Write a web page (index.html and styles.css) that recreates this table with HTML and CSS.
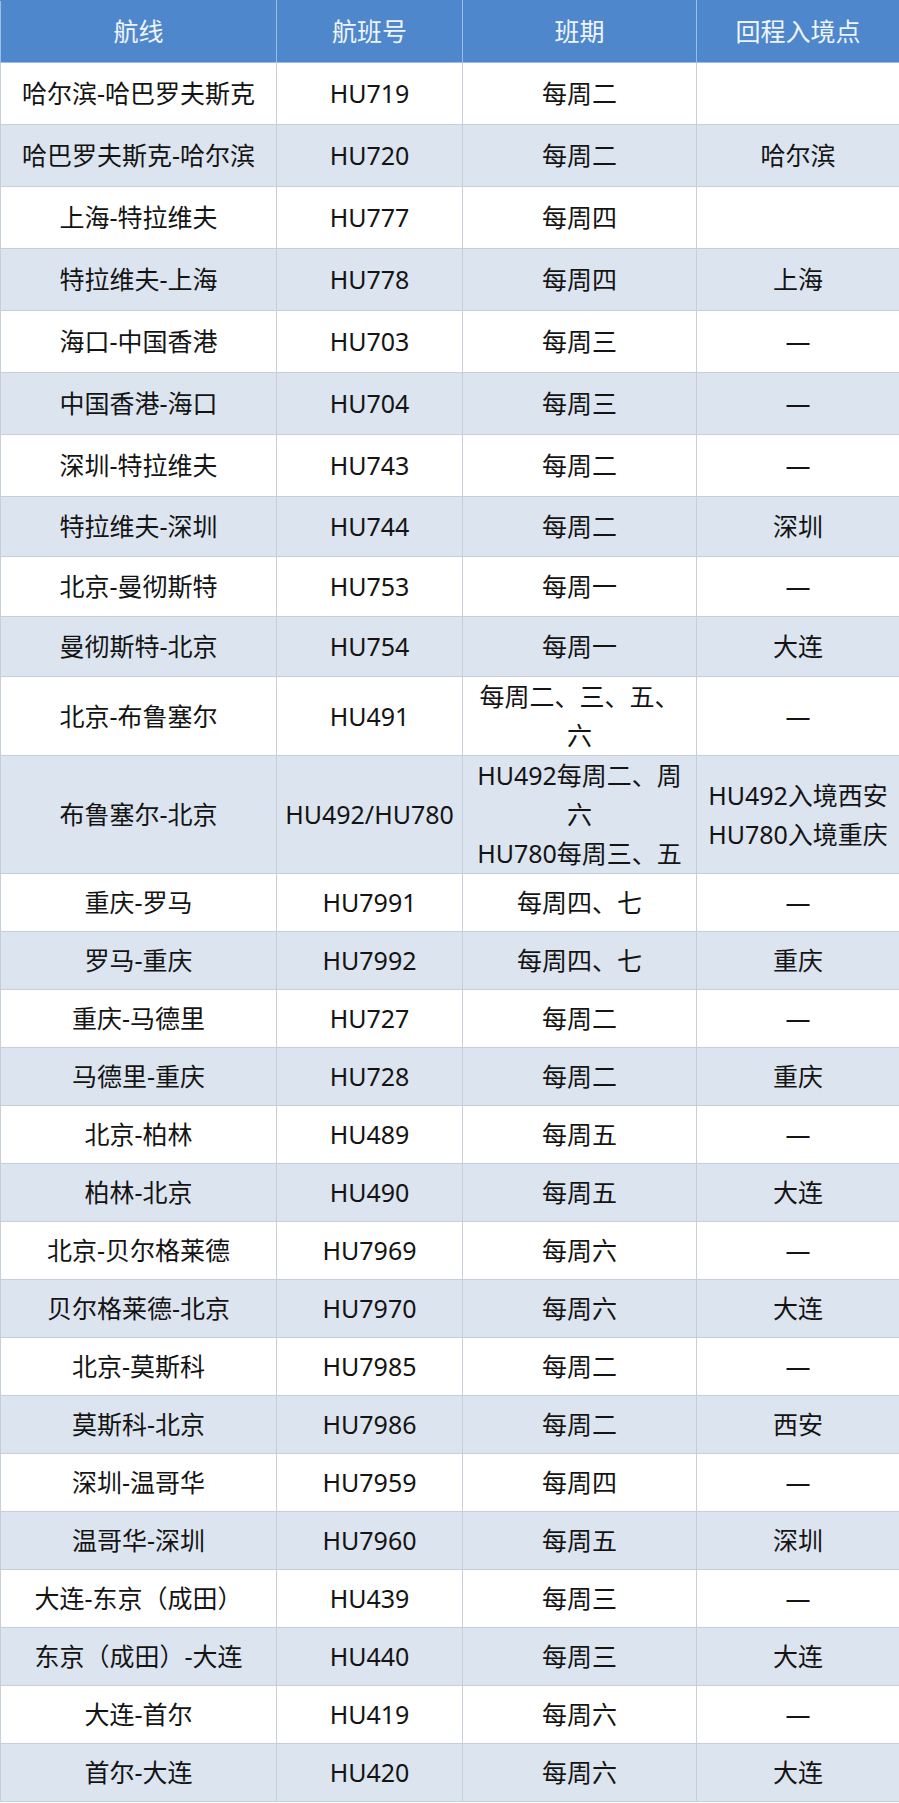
FILE: index.html
```html
<!DOCTYPE html>
<html lang="zh-CN">
<head>
<meta charset="utf-8">
<title>航线班期</title>
<link rel="stylesheet" href="styles.css">
</head>
<body>
<table class="flights">
  <colgroup>
    <col class="c-route">
    <col class="c-no">
    <col class="c-days">
    <col class="c-entry">
  </colgroup>
  <thead>
    <tr><th>航线</th><th>航班号</th><th>班期</th><th>回程入境点</th></tr>
  </thead>
  <tbody>
    <tr><td>哈尔滨-哈巴罗夫斯克</td><td>HU719</td><td>每周二</td><td></td></tr>
    <tr><td>哈巴罗夫斯克-哈尔滨</td><td>HU720</td><td>每周二</td><td>哈尔滨</td></tr>
    <tr><td>上海-特拉维夫</td><td>HU777</td><td>每周四</td><td></td></tr>
    <tr><td>特拉维夫-上海</td><td>HU778</td><td>每周四</td><td>上海</td></tr>
    <tr><td>海口-中国香港</td><td>HU703</td><td>每周三</td><td>—</td></tr>
    <tr><td>中国香港-海口</td><td>HU704</td><td>每周三</td><td>—</td></tr>
    <tr><td>深圳-特拉维夫</td><td>HU743</td><td>每周二</td><td>—</td></tr>
    <tr><td>特拉维夫-深圳</td><td>HU744</td><td>每周二</td><td>深圳</td></tr>
    <tr><td>北京-曼彻斯特</td><td>HU753</td><td>每周一</td><td>—</td></tr>
    <tr><td>曼彻斯特-北京</td><td>HU754</td><td>每周一</td><td>大连</td></tr>
    <tr><td>北京-布鲁塞尔</td><td>HU491</td><td>每周二、三、五、六</td><td>—</td></tr>
    <tr><td>布鲁塞尔-北京</td><td>HU492/HU780</td><td>HU492每周二、周六<br>HU780每周三、五</td><td>HU492入境西安<br>HU780入境重庆</td></tr>
    <tr><td>重庆-罗马</td><td>HU7991</td><td>每周四、七</td><td>—</td></tr>
    <tr><td>罗马-重庆</td><td>HU7992</td><td>每周四、七</td><td>重庆</td></tr>
    <tr><td>重庆-马德里</td><td>HU727</td><td>每周二</td><td>—</td></tr>
    <tr><td>马德里-重庆</td><td>HU728</td><td>每周二</td><td>重庆</td></tr>
    <tr><td>北京-柏林</td><td>HU489</td><td>每周五</td><td>—</td></tr>
    <tr><td>柏林-北京</td><td>HU490</td><td>每周五</td><td>大连</td></tr>
    <tr><td>北京-贝尔格莱德</td><td>HU7969</td><td>每周六</td><td>—</td></tr>
    <tr><td>贝尔格莱德-北京</td><td>HU7970</td><td>每周六</td><td>大连</td></tr>
    <tr><td>北京-莫斯科</td><td>HU7985</td><td>每周二</td><td>—</td></tr>
    <tr><td>莫斯科-北京</td><td>HU7986</td><td>每周二</td><td>西安</td></tr>
    <tr><td>深圳-温哥华</td><td>HU7959</td><td>每周四</td><td>—</td></tr>
    <tr><td>温哥华-深圳</td><td>HU7960</td><td>每周五</td><td>深圳</td></tr>
    <tr><td>大连-东京（成田）</td><td>HU439</td><td>每周三</td><td>—</td></tr>
    <tr><td>东京（成田）-大连</td><td>HU440</td><td>每周三</td><td>大连</td></tr>
    <tr><td>大连-首尔</td><td>HU419</td><td>每周六</td><td>—</td></tr>
    <tr><td>首尔-大连</td><td>HU420</td><td>每周六</td><td>大连</td></tr>
  </tbody>
</table>
</body>
</html>
```

FILE: styles.css
```css
html, body {
  margin: 0;
  padding: 0;
  background: #ffffff;
}

.flights {
  width: 899px;
  table-layout: fixed;
  border-collapse: collapse;
  font-family: "Noto Sans", "Noto Sans CJK SC", sans-serif;
  font-size: 25px;
  color: #141414;
}

.c-route { width: 276px; }
.c-no { width: 186px; }
.c-days { width: 234px; }
.c-entry { width: 203px; }

.flights th,
.flights td {
  text-align: center;
  vertical-align: middle;
  padding: 0 7px;
  line-height: 39px;
  border: 1px solid #c6ceda;
}

.flights thead tr {
  height: 62px;
}

.flights th {
  background: #4f87cc;
  color: #eef4fb;
  font-weight: normal;
  font-size: 25px;
  border-color: #9dbce4;
  border-top-color: #4f87cc;
}

.flights tbody tr {
  height: 58px;
  background: #ffffff;
}

.flights tbody tr:nth-child(-n+7) {
  height: 62px;
}

.flights tbody tr:nth-child(n+8):nth-child(-n+10) {
  height: 60px;
}

.flights tbody tr:nth-child(even) {
  background: #dce4ef;
}

.flights td:first-child,
.flights th:first-child {
  white-space: nowrap;
  padding: 0 4px;
}
```
